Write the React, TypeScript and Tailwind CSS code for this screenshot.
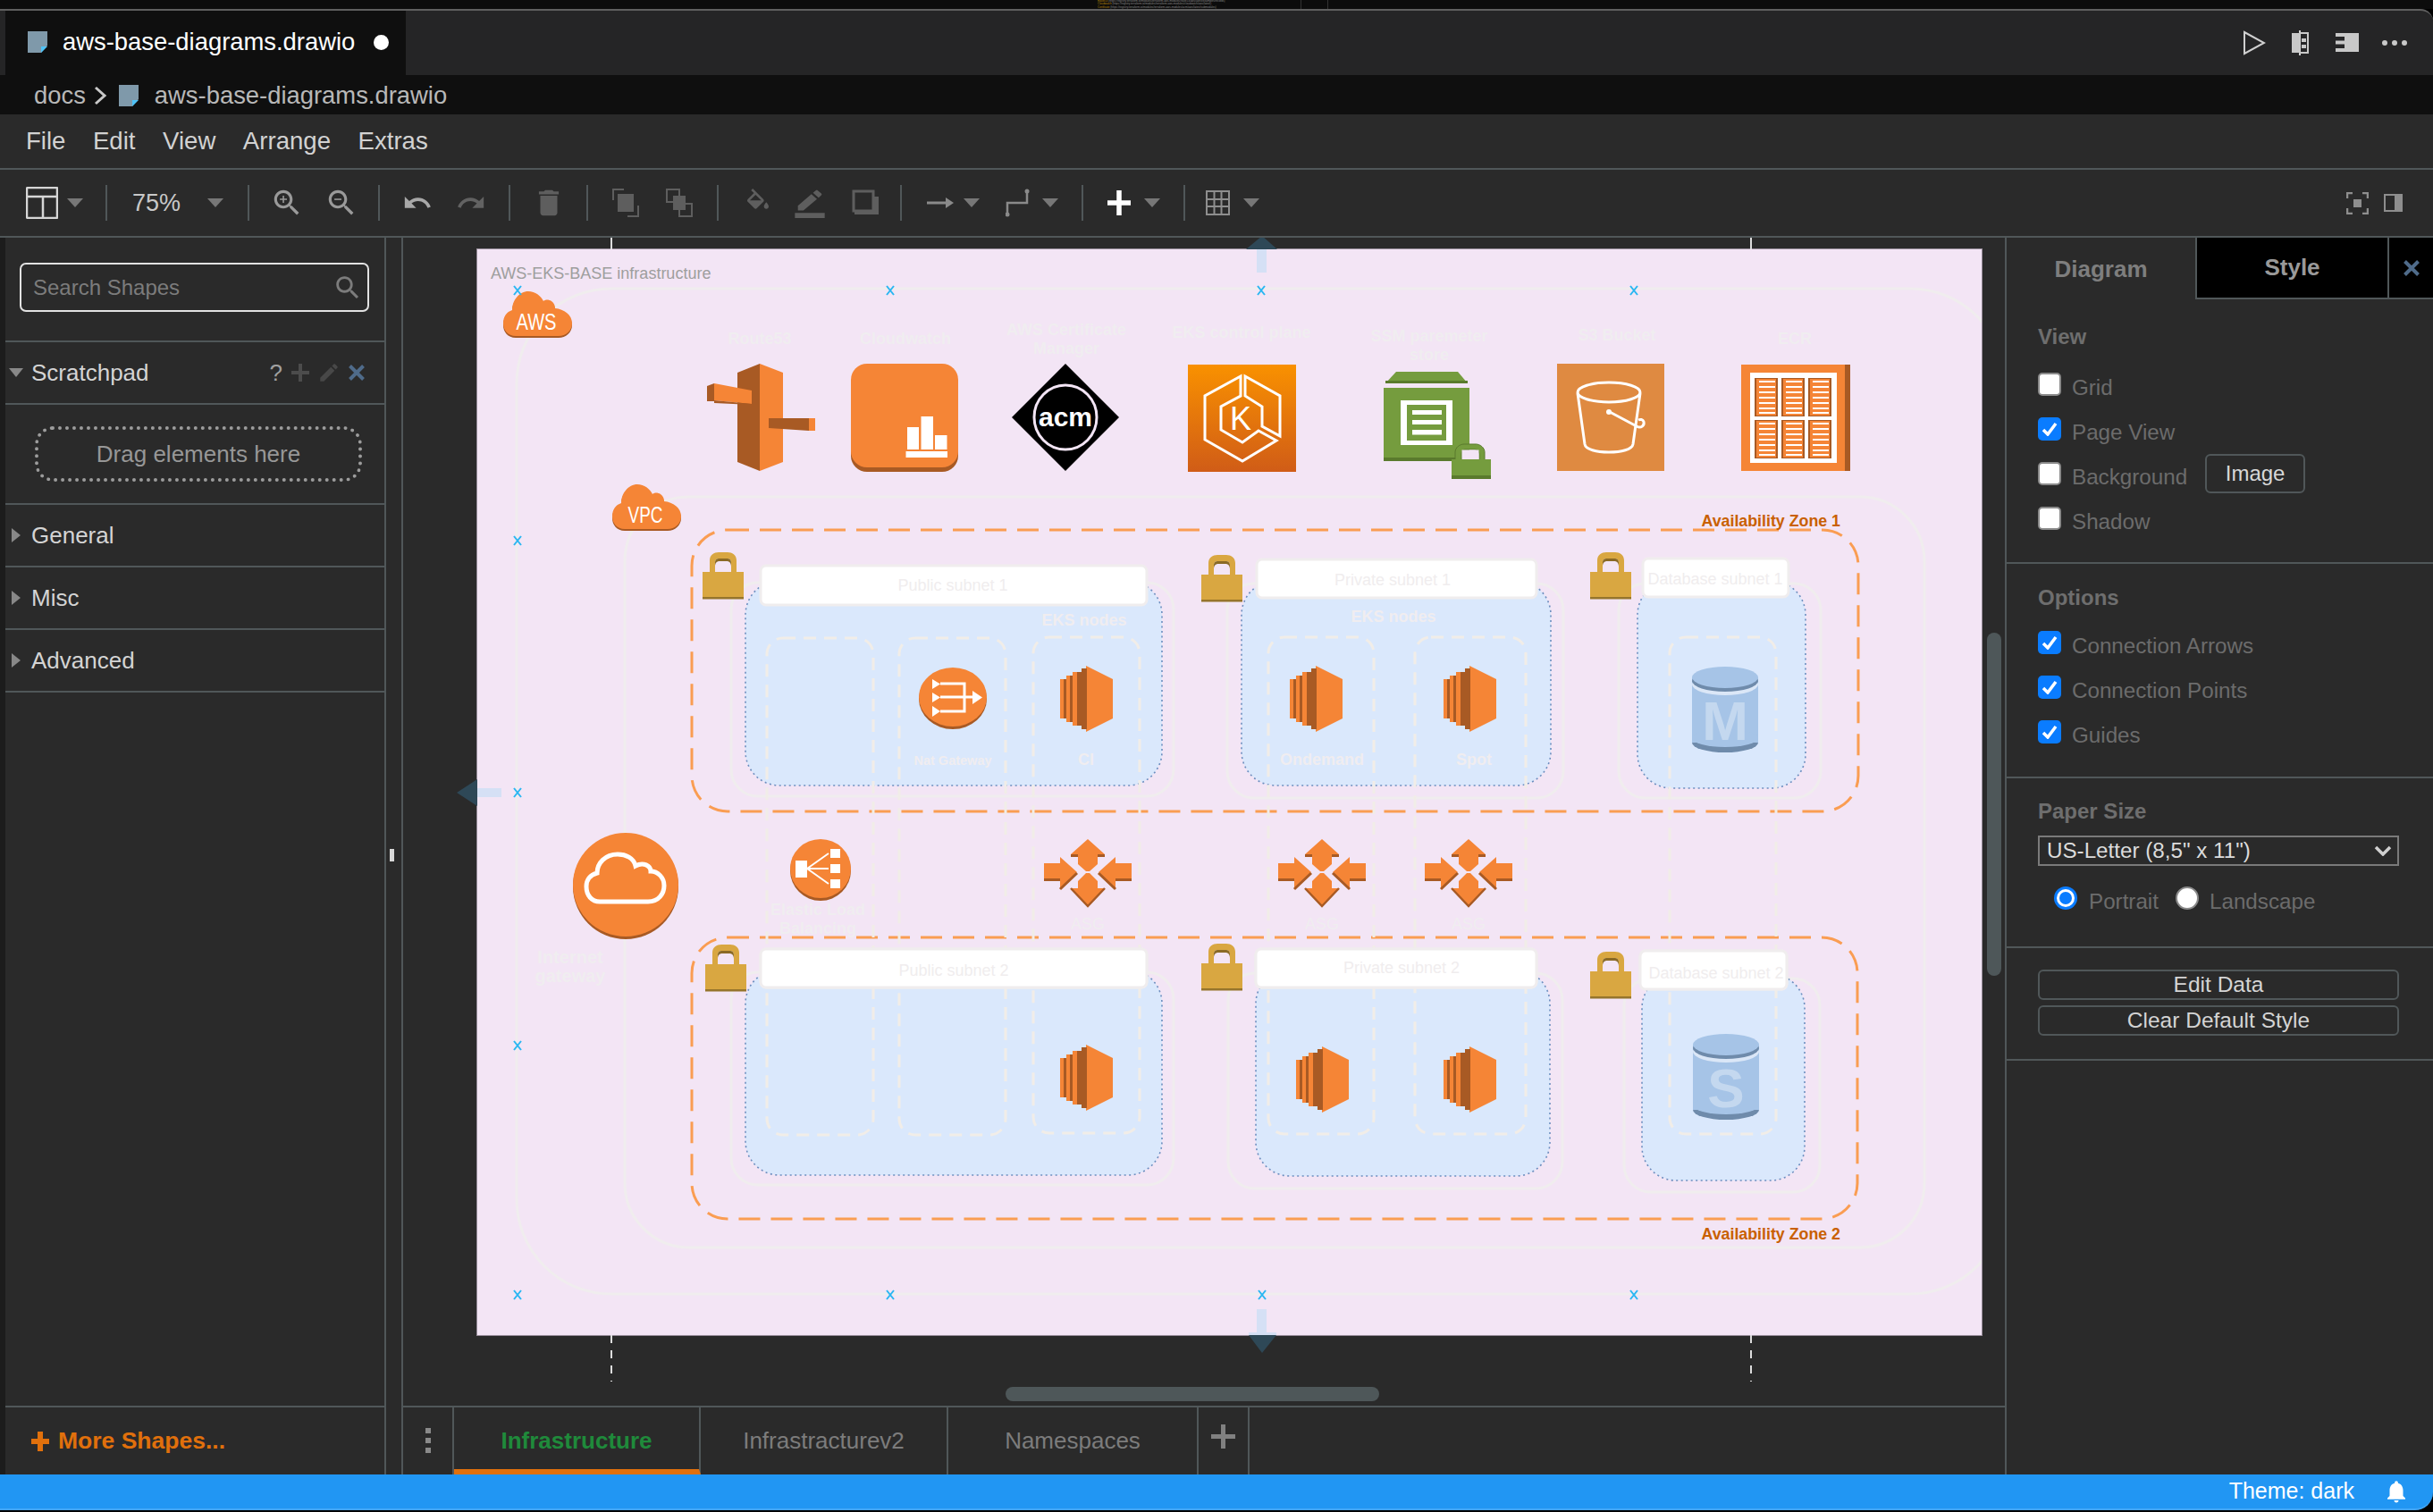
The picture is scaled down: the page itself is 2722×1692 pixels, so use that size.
import React from 'react';

const ORANGE = '#f58536';
const DARK = '#a85a24';
const FAINT = '#f0edf0';
const LINE = '#f0edee';

// material icon paths, the toolbar uses most of these
const P = {
  undo: 'M12.5 8c-2.65 0-5.05.99-6.9 2.6L2 7v9h9l-3.62-3.62c1.39-1.16 3.16-1.88 5.12-1.88 3.54 0 6.55 2.31 7.6 5.5l2.37-.78C21.08 11.03 17.15 8 12.5 8z',
  redo: 'M18.4 10.6C16.55 8.99 14.15 8 11.5 8c-4.65 0-8.58 3.03-9.96 7.22L3.9 16c1.05-3.19 4.05-5.5 7.6-5.5 1.95 0 3.73.72 5.12 1.88L13 16h9V7l-3.6 3.6z',
  trash: 'M6 19c0 1.1.9 2 2 2h8c1.1 0 2-.9 2-2V7H6v12zM19 4h-3.5l-1-1h-5l-1 1H5v2h14V4z',
  search: 'M15.5 14h-.79l-.28-.27C15.41 12.59 16 11.11 16 9.5 16 5.91 13.09 3 9.5 3S3 5.91 3 9.5 5.91 16 9.5 16c1.61 0 3.09-.59 4.23-1.57l.27.28v.79l5 4.99L20.49 19l-4.99-5zm-6 0C7.01 14 5 11.99 5 9.5S7.01 5 9.5 5 14 7.01 14 9.5 11.99 14 9.5 14z',
  fill: 'M16.56 8.94L7.62 0 6.21 1.41l2.38 2.38-5.15 5.15c-.59.59-.59 1.54 0 2.12l5.5 5.5c.29.29.68.44 1.06.44s.77-.15 1.06-.44l5.5-5.5c.59-.58.59-1.53 0-2.12zM5.21 10L10 5.21 14.79 10H5.21zM19 11.5s-2 2.17-2 3.5c0 1.1.9 2 2 2s2-.9 2-2c0-1.33-2-3.5-2-3.5z',
  line: 'M22 24H2v-4h20v4zM13.06 5.19l3.75 3.75L7.75 18H4v-3.75l9.06-9.06zm4.82 2.68l-3.75-3.75 1.83-1.83c.39-.39 1.02-.39 1.41 0l2.34 2.34c.39.39.39 1.02 0 1.41l-1.83 1.83z',
  bell: 'M12 22c1.1 0 2-.9 2-2h-4c0 1.1.89 2 2 2zm6-6v-5c0-3.07-1.64-5.64-4.5-6.32V4c0-.83-.67-1.5-1.5-1.5s-1.5.67-1.5 1.5v.68C7.63 5.36 6 7.92 6 11v5l-2 2v1h16v-1l-2-2z',
  edit: 'M3 17.25V21h3.75L17.81 9.94l-3.75-3.75L3 17.25zM20.71 7.04c.39-.39.39-1.02 0-1.41l-2.34-2.34c-.39-.39-1.02-.39-1.41 0l-1.83 1.83 3.75 3.75 1.83-1.83z',
};

const Mat = ({ d, size, color, className }: { d: string; size: number; color: string; className?: string }) => (
  <svg width={size} height={size} viewBox="0 0 24 24" className={className}>
    <path d={d} fill={color} />
  </svg>
);

const Sep = ({ className }: { className: string }) => <div className={`w-[2px] h-[40px] bg-[#505759] shrink-0 ${className}`} />;

const Caret = ({ className }: { className: string }) => (
  <svg width="18" height="10" viewBox="0 0 18 10" className={`shrink-0 ${className}`}>
    <polygon points="0,0 18,0 9,10" fill="#777" />
  </svg>
);

const FileIcon = () => (
  <svg width="22" height="24" viewBox="0 0 22 24">
    <path d="M0 0H22V16L15 24H0Z" fill="#7f99aa" />
    <path d="M15 24V17H22Z" fill="#4fc3f7" />
  </svg>
);

const ToolBar = () => (
  <div className="h-[76px] flex items-center pl-[29px] pr-[34px] border-b-2 border-[#505759] bg-[#2a2a2a] shrink-0">
    <svg width="36" height="36" viewBox="0 0 36 36" className="shrink-0">
      <rect x="1" y="1" width="34" height="34" rx="1" fill="none" stroke="#d6d6d6" strokeWidth="2.5" />
      <path d="M1 11H35M19 11V35" stroke="#d6d6d6" strokeWidth="2.5" />
    </svg>
    <Caret className="ml-[10px]" />
    <Sep className="ml-[25px]" />
    <span className="ml-[28px] w-[56px] text-[27px] text-[#c8c8c8]">75%</span>
    <Caret className="ml-[28px]" />
    <Sep className="ml-[27px]" />
    <svg width="38" height="38" viewBox="0 0 24 24" className="ml-[23px] shrink-0">
      <path d={P.search} fill="#9a9a9a" />
      <path d="M12 10h-2v2H9v-2H7V9h2V7h1v2h2v1z" fill="#9a9a9a" />
    </svg>
    <svg width="38" height="38" viewBox="0 0 24 24" className="ml-[23px] shrink-0">
      <path d={P.search} fill="#9a9a9a" />
      <path d="M7 9h5v1H7z" fill="#9a9a9a" />
    </svg>
    <Sep className="ml-[22px]" />
    <Mat d={P.undo} size={34} color="#a8a8a8" className="ml-[25px] shrink-0" />
    <Mat d={P.redo} size={34} color="#626262" className="ml-[26px] shrink-0" />
    <Sep className="ml-[25px]" />
    <Mat d={P.trash} size={38} color="#5e5e5e" className="ml-[24px] shrink-0" />
    <Sep className="ml-[23px]" />
    <svg width="32" height="34" viewBox="0 0 32 34" className="ml-[26px] shrink-0">
      <path d="M2 14V2H14M18 32H30V20" fill="none" stroke="#5e5e5e" strokeWidth="2" />
      <rect x="7" y="7" width="18" height="20" fill="#5e5e5e" />
    </svg>
    <svg width="32" height="34" viewBox="0 0 32 34" className="ml-[28px] shrink-0">
      <rect x="2" y="2" width="14" height="14" fill="none" stroke="#5e5e5e" strokeWidth="2" />
      <rect x="16" y="18" width="14" height="14" fill="none" stroke="#5e5e5e" strokeWidth="2" />
      <rect x="9" y="9" width="14" height="16" fill="#5e5e5e" />
    </svg>
    <Sep className="ml-[26px]" />
    <Mat d={P.fill} size={32} color="#5e5e5e" className="ml-[28px] shrink-0" />
    <svg width="40" height="34" viewBox="0 0 24 24" preserveAspectRatio="none" className="ml-[22px] shrink-0">
      <path d={P.line} fill="#5e5e5e" />
    </svg>
    <svg width="30" height="30" viewBox="0 0 30 30" className="ml-[27px] shrink-0">
      <rect x="2" y="2" width="22" height="22" fill="none" stroke="#5e5e5e" strokeWidth="3" />
      <path d="M3 24V28H30V8H25V24Z" fill="#5e5e5e" />
    </svg>
    <Sep className="ml-[24px]" />
    <svg width="30" height="14" viewBox="0 0 30 14" className="ml-[28px] shrink-0">
      <path d="M0 7H22" stroke="#8a8a8a" strokeWidth="3" />
      <polygon points="21,1 30,7 21,13" fill="#8a8a8a" />
    </svg>
    <Caret className="ml-[11px]" />
    <svg width="28" height="32" viewBox="0 0 28 32" className="ml-[29px] shrink-0">
      <path d="M2 28V16H24V4" fill="none" stroke="#8a8a8a" strokeWidth="2.5" />
      <circle cx="24" cy="3" r="2.5" fill="#8a8a8a" />
      <circle cx="2" cy="29" r="2.5" fill="#8a8a8a" />
    </svg>
    <Caret className="ml-[13px]" />
    <Sep className="ml-[26px]" />
    <svg width="26" height="28" viewBox="0 0 26 28" className="ml-[27px] shrink-0">
      <path d="M13 0V28M0 14H26" stroke="#fff" strokeWidth="5.5" />
    </svg>
    <Caret className="ml-[15px]" />
    <Sep className="ml-[26px]" />
    <svg width="27" height="28" viewBox="0 0 27 28" className="ml-[23px] shrink-0">
      <path d="M1 1H26V27H1ZM1 10H26M1 18H26M9.5 1V27M17.5 1V27" fill="none" stroke="#8e8e8e" strokeWidth="2" />
    </svg>
    <Caret className="ml-[15px]" />
    <svg width="25" height="25" viewBox="0 0 25 25" className="ml-auto shrink-0">
      <path d="M1 7V1H7M18 1H24V7M24 18V24H18M7 24H1V18" fill="none" stroke="#8e8e8e" strokeWidth="2.5" />
      <rect x="8" y="8" width="9" height="9" fill="#8e8e8e" />
    </svg>
    <svg width="21" height="20" viewBox="0 0 21 20" className="ml-[17px] shrink-0">
      <rect x="1" y="1" width="19" height="18" fill="none" stroke="#8e8e8e" strokeWidth="2" />
      <rect x="12" y="1" width="8" height="18" fill="#8e8e8e" />
    </svg>
  </div>
);

const Row = ({ name }: { name: string }) => (
  <div className="h-[70px] flex items-center border-b-2 border-[#505759] shrink-0 pl-[7px]">
    <svg width="10" height="16" viewBox="0 0 10 16"><polygon points="0,0 10,8 0,16" fill="#888" /></svg>
    <span className="ml-[12px] text-[26px] text-[#d4d4d4]">{name}</span>
  </div>
);

const SideBar = () => (
  <div className="w-[426px] shrink-0 flex flex-col bg-[#2a2a2a] border-r-2 border-[#505759]">
    <div className="h-[117px] border-b-2 border-[#505759] shrink-0 pt-[28px] pl-[16px]">
      <div className="w-[391px] h-[55px] border-2 border-[#e2e2e2] rounded-[7px] flex items-center pl-[13px] pr-[5px]">
        <span className="text-[24px] text-[#7c7c7c]">Search Shapes</span>
        <Mat d={P.search} size={34} color="#7c7c7c" className="ml-auto" />
      </div>
    </div>
    <div className="h-[70px] flex items-center border-b-2 border-[#505759] shrink-0 pl-[4px]">
      <svg width="16" height="10" viewBox="0 0 16 10"><polygon points="0,0 16,0 8,10" fill="#888" /></svg>
      <span className="ml-[9px] text-[26px] text-[#d4d4d4]">Scratchpad</span>
      <span className="ml-auto text-[26px] text-[#a0a0a0]">?</span>
      <svg width="20" height="20" viewBox="0 0 20 20" className="ml-[10px]"><path d="M10 0V20M0 10H20" stroke="#4c4c4c" strokeWidth="4" /></svg>
      <Mat d={P.edit} size={26} color="#484848" className="ml-[9px]" />
      <svg width="18" height="18" viewBox="0 0 18 18" className="ml-[9px] mr-[22px]"><path d="M1.5 1.5L16.5 16.5M16.5 1.5L1.5 16.5" stroke="#4f6b8a" strokeWidth="4" /></svg>
    </div>
    <div className="h-[112px] border-b-2 border-[#505759] shrink-0 pt-[24px] pl-[33px]">
      <div className="w-[366px] h-[62px] border-[4px] border-dotted border-[#9c9c9c] rounded-[20px] flex items-center justify-center text-[26px] text-[#979797]">
        Drag elements here
      </div>
    </div>
    <Row name="General" />
    <Row name="Misc" />
    <Row name="Advanced" />
    <div className="mt-auto h-[77px] border-t-2 border-[#505759] flex items-center pl-[29px] text-[#e0700c]">
      <svg width="20" height="24" viewBox="0 0 20 24"><path d="M10 1V23M0 12H20" stroke="#e0700c" strokeWidth="6" /></svg>
      <span className="ml-[10px] text-[26.5px] font-bold">More Shapes...</span>
    </div>
  </div>
);

const Check = ({ on, label, className }: { on?: boolean; label: string; className: string }) => (
  <div className={`flex items-start h-[26px] ${className}`}>
    {on ? (
      <div className="w-[26px] h-[26px] rounded-[5px] bg-[#0a7cff] flex items-center justify-center">
        <svg width="18" height="16" viewBox="0 0 18 16"><path d="M2 9L7 14L16 2" fill="none" stroke="#fff" strokeWidth="3.5" /></svg>
      </div>
    ) : (
      <div className="w-[26px] h-[26px] rounded-[5px] bg-white border-2 border-[#8a8a8a]" />
    )}
    <span className="ml-[12px] text-[24.2px] leading-[34px] text-[#6c6c6c]">{label}</span>
  </div>
);

const RightPanel = () => (
  <div className="w-[479px] shrink-0 flex flex-col bg-[#2a2a2a] border-l-2 border-[#505759]">
    <div className="h-[69px] flex shrink-0">
      <div className="w-[211px] flex items-center justify-center text-[26px] font-bold text-[#7e7e7e] pt-[1px]">Diagram</div>
      <div className="w-[215px] flex items-center justify-center text-[26px] font-bold text-[#999] bg-black border-l-2 border-b-2 border-[#505759] pb-[1px]">Style</div>
      <div className="flex-1 flex items-center justify-center bg-black border-l-2 border-b-2 border-[#505759]">
        <svg width="18" height="18" viewBox="0 0 18 18"><path d="M1.5 1.5L16.5 16.5M16.5 1.5L1.5 16.5" stroke="#4f6b8a" strokeWidth="4" /></svg>
      </div>
    </div>
    <div className="h-[296px] border-b-2 border-[#505759] pl-[35px] pt-[27px] shrink-0">
      <div className="text-[24px] leading-[30px] font-bold text-[#6e6e6e]">View</div>
      <Check label="Grid" className="mt-[25px]" />
      <Check on label="Page View" className="mt-[24px]" />
      <div className="flex items-start h-[26px] mt-[24px]">
        <Check label="Background" className="" />
        <div className="ml-[20px] -mt-[9px] w-[112px] h-[44px] border-2 border-[#505759] rounded-[6px] flex items-center justify-center text-[24px] text-[#d8d8d8]">Image</div>
      </div>
      <Check label="Shadow" className="mt-[24px]" />
    </div>
    <div className="h-[240px] border-b-2 border-[#505759] pl-[35px] pt-[23px] shrink-0">
      <div className="text-[24px] leading-[30px] font-bold text-[#6e6e6e]">Options</div>
      <Check on label="Connection Arrows" className="mt-[22px]" />
      <Check on label="Connection Points" className="mt-[24px]" />
      <Check on label="Guides" className="mt-[24px]" />
    </div>
    <div className="h-[190px] border-b-2 border-[#505759] pl-[35px] pt-[22px] shrink-0">
      <div className="text-[24px] leading-[30px] font-bold text-[#6e6e6e]">Paper Size</div>
      <div className="mt-[12px] w-[404px] h-[34px] border-2 border-[#7a7a7a] flex items-center pl-[8px] pr-[6px] text-[24.2px] text-[#dcdcdc]">
        US-Letter (8,5" x 11")
        <svg width="20" height="12" viewBox="0 0 20 12" className="ml-auto"><path d="M2 2L10 10L18 2" fill="none" stroke="#d0d0d0" strokeWidth="3.5" /></svg>
      </div>
      <div className="mt-[23px] ml-[18px] flex items-start h-[34px]">
        <div className="w-[26px] h-[26px] rounded-full bg-[#0a7cff] flex items-center justify-center">
          <div className="w-[20px] h-[20px] rounded-full bg-white flex items-center justify-center">
            <div className="w-[14px] h-[14px] rounded-full bg-[#0a7cff]" />
          </div>
        </div>
        <span className="ml-[13px] text-[24.2px] leading-[34px] text-[#6c6c6c] w-[97px]">Portrait</span>
        <div className="w-[26px] h-[26px] rounded-full bg-white border-2 border-[#8a8a8a]" />
        <span className="ml-[12px] text-[24.2px] leading-[34px] text-[#6c6c6c]">Landscape</span>
      </div>
    </div>
    <div className="h-[126px] border-b-2 border-[#505759] pl-[35px] pt-[24px] shrink-0">
      <div className="w-[404px] h-[34px] border-2 border-[#505759] rounded-[6px] flex items-center justify-center text-[24.5px] text-[#d4d4d4]">Edit Data</div>
      <div className="mt-[6px] w-[404px] h-[34px] border-2 border-[#505759] rounded-[6px] flex items-center justify-center text-[24.5px] text-[#d4d4d4]">Clear Default Style</div>
    </div>
  </div>
);

const PageTabs = () => (
  <div className="h-[77px] shrink-0 border-t-2 border-[#505759] flex bg-[#2a2a2a]">
    <div className="w-[57px] flex items-center justify-center border-r-2 border-[#505759] pb-[2px]">
      <svg width="6" height="28" viewBox="0 0 6 28">
        <rect y="0" width="6" height="6" fill="#8a8a8a" />
        <rect y="11" width="6" height="6" fill="#8a8a8a" />
        <rect y="22" width="6" height="6" fill="#8a8a8a" />
      </svg>
    </div>
    <div className="w-[276px] flex items-center justify-center border-r-2 border-[#505759] border-b-[6px] border-b-[#e0700c] pt-[6px] text-[26px] font-bold text-[#1f8a3b]">Infrastructure</div>
    <div className="w-[277px] flex items-center justify-center border-r-2 border-[#505759] text-[26px] text-[#7c7c7c]">Infrastracturev2</div>
    <div className="w-[280px] flex items-center justify-center border-r-2 border-[#505759] text-[26px] text-[#7c7c7c]">Namespaces</div>
    <div className="w-[57px] flex items-center justify-center border-r-2 border-[#505759] pb-[10px]">
      <svg width="27" height="27" viewBox="0 0 27 27"><path d="M13.5 0V27M0 13.5H27" stroke="#808080" strokeWidth="5" /></svg>
    </div>
  </div>
);

// --- diagram shapes, all in screenshot coordinates ---

const Box = ({ x, y, w, h, r }: { x: number; y: number; w: number; h: number; r: number }) => (
  <rect x={x} y={y} width={w} height={h} rx={r} fill="none" stroke={LINE} strokeWidth="3" />
);

const Subnet = ({ o, b, w, label }: { o: number[]; b: number[]; w: number[]; label: [string, number, number] }) => (
  <g>
    <rect x={o[0]} y={o[1]} width={o[2] - o[0]} height={o[3] - o[1]} rx="30" fill="none" stroke={LINE} strokeWidth="3" />
    <rect x={b[0]} y={b[1]} width={b[2] - b[0]} height={b[3] - b[1]} rx="38" fill="#dae8fc" stroke="#6c8ebf" strokeWidth="1.6" strokeDasharray="2 3.5" />
    <rect x={w[0]} y={w[1]} width={w[2] - w[0]} height={w[3] - w[1]} rx="6" fill="#fff" stroke={LINE} strokeWidth="3" />
    <text x={label[1]} y={label[2]} textAnchor="middle" dominantBaseline="central" fontSize="18" fill={LINE}>{label[0]}</text>
  </g>
);

const Lock = ({ x, y }: { x: number; y: number }) => (
  <g transform={`translate(${x} ${y})`}>
    <path d="M8 24V9C8 3 13 0 18 0H28C33 0 38 3 38 9V24H32V12C32 8 30 7 27 7H19C16 7 14 8 14 12V24Z" fill="#d9a741" />
    <path d="M14 16V12C14 8 16 7 19 7H27C30 7 32 8 32 12V16C32 12 30 10 27 10H19C16 10 14 12 14 16Z" fill="#8a6a25" />
    <rect x="0" y="22" width="46" height="30" fill="#d9a741" />
    <rect x="0" y="50" width="46" height="2.5" fill="#96752b" />
  </g>
);

const Ec2 = ({ x, y }: { x: number; y: number }) => (
  <g transform={`translate(${x} ${y})`}>
    <polygon points="29,0 59,15 59,59 29,74" fill={ORANGE} />
    <rect x="24" y="3" width="6" height="68" fill={DARK} />
    <rect x="14" y="7" width="10" height="60" fill={ORANGE} />
    <rect x="19" y="7" width="5" height="60" fill={DARK} />
    <rect x="7" y="11" width="7" height="52" fill={ORANGE} />
    <rect x="11" y="11" width="3" height="52" fill={DARK} />
    <rect x="0" y="15" width="7" height="44" fill={ORANGE} />
    <rect x="4" y="15" width="3" height="44" fill={DARK} />
  </g>
);

const Asg = ({ x, y }: { x: number; y: number }) => (
  <g transform={`translate(${x} ${y})`}>
    <polygon points="30,17 30,20 38,20 38,24 60,24 60,20 68,20 68,17" fill={DARK} />
    <polygon points="49,0 68,17 60,17 60,28 51,36 47,36 38,28 38,17 30,17" fill={ORANGE} />
    <polygon points="49,75 30,55 38,55 38,47 47,38 51,38 60,47 60,55 68,55" fill={ORANGE} />
    <path d="M30 55L49 75L68 55" fill="none" stroke={DARK} strokeWidth="2.5" />
    <polygon points="0,27 18,27 18,20 37,37 18,55 18,44 0,44" fill={ORANGE} />
    <polygon points="98,27 80,27 80,20 61,37 80,55 80,44 98,44" fill={ORANGE} />
    <path d="M0 45.5H18M98 45.5H80M37 38L18 56M61 38L80 56" fill="none" stroke={DARK} strokeWidth="3" />
  </g>
);

const Cloud = ({ x, y, t, tw }: { x: number; y: number; t: string; tw: number }) => (
  <g transform={`translate(${x} ${y})`}>
    <path d="M14 52C5 52 0 45 0 38C0 30 4 25 10 23C10 11 18 2 28 2C36 2 42 7 45 13C47 11 51 11 54 13C57 15 58 18 58 21C68 22 77 28 77 38C77 46 70 52 62 52Z" fill={DARK} />
    <path d="M14 50C5 50 0 43 0 36C0 28 4 23 10 21C10 10 18 0 28 0C36 0 42 5 45 11C47 9 51 9 54 11C57 13 58 16 58 19C68 20 77 26 77 36C77 44 70 50 62 50Z" fill={ORANGE} />
    <text x="37" y="34" textAnchor="middle" dominantBaseline="central" fontSize="26" fill="#fff" textLength={tw} lengthAdjust="spacingAndGlyphs">{t}</text>
  </g>
);

const Rds = ({ x, y, letter }: { x: number; y: number; letter: string }) => (
  <g transform={`translate(${x} ${y})`}>
    <ellipse cx="37" cy="85" rx="37" ry="11" fill="#6f8bab" />
    <rect x="0" y="12" width="74" height="73" fill="#a6c4e7" />
    <ellipse cx="37" cy="80" rx="37" ry="10" fill="#a6c4e7" />
    <ellipse cx="37" cy="20" rx="37" ry="12" fill="#dbe7f7" />
    <ellipse cx="37" cy="16" rx="37" ry="12" fill="#6f8bab" />
    <ellipse cx="37" cy="12" rx="37" ry="12" fill="#a6c4e7" />
    <text x="37" y="60" textAnchor="middle" dominantBaseline="central" fontSize="62" fontWeight="700" fill="#c4d8ef">{letter}</text>
  </g>
);

const Mark = ({ x, y }: { x: number; y: number }) => (
  <path d={`M${x - 4} ${y - 5}L${x + 4} ${y + 5}M${x + 4} ${y - 5}L${x - 4} ${y + 5}`} stroke="#29b6f2" strokeWidth="2" />
);

const Lbl = ({ x, y, t, s = 18, b = true, c = FAINT }: { x: number; y: number; t: string; s?: number; b?: boolean; c?: string }) => (
  <text x={x} y={y} textAnchor="middle" dominantBaseline="central" fontSize={s} fontWeight={b ? 700 : 400} fill={c}>{t}</text>
);

const Column = ({ x, x2, y, y2 }: { x: number; x2: number; y: number; y2: number }) => (
  <rect x={x} y={y} width={x2 - x} height={y2 - y} rx="18" fill="none" stroke="#f1ede8" strokeWidth="3" strokeDasharray="14 9" />
);

const Ecr = () => {
  const cols = [1953, 1983, 2013];
  const rows = [423, 470];
  return (
    <g>
      <rect x="1947" y="408" width="122" height="119" fill={ORANGE} />
      <rect x="2063" y="408" width="6" height="119" fill={DARK} />
      <rect x="1957" y="417" width="97" height="101" fill="#fff" />
      {cols.map((cx) =>
        rows.map((cy) => (
          <g key={`${cx}-${cy}`}>
            <rect x={cx + 9} y={cy} width="26" height="43" fill={DARK} />
            <rect x={cx + 11} y={cy + 1} width="22" height="41" fill={ORANGE} />
            {[3, 9, 15, 21, 27, 33, 38].map((dy) => (
              <rect key={dy} x={cx + 14} y={cy + dy} width="18" height="2" fill="#fff" />
            ))}
          </g>
        ))
      )}
    </g>
  );
};

const Diagram = () => (
  <svg width="1793" height="1307" viewBox="450 266 1793 1307" className="absolute left-0 top-0">
    <defs>
      <clipPath id="page"><rect x="533" y="279" width="1683" height="1215" /></clipPath>
      <linearGradient id="eks" x1="0" y1="0" x2="0" y2="1">
        <stop offset="0" stopColor="#f99100" />
        <stop offset="1" stopColor="#d05c17" />
      </linearGradient>
    </defs>

    {/* page break guides */}
    <path d="M683 266V279M1958 266V279" stroke="#ddd" strokeWidth="2" />
    <path d="M683 1494V1546M1958 1494V1546" stroke="#ddd" strokeWidth="2" strokeDasharray="9 8" />

    {/* hover arrows, half on the dark canvas */}
    <polygon points="1411,264 1428,279 1393,279" fill="#2e4857" />
    <rect x="1405" y="279" width="11" height="26" fill="#d5e0f5" />
    <rect x="1405" y="1465" width="11" height="28" fill="#d5e0f5" />
    <polygon points="1396,1491 1427,1491 1427,1494 1396,1494" fill="#d5e0f5" />
    <polygon points="1396,1494 1427,1494 1411,1514" fill="#2e4857" />
    <polygon points="533,872 533,902 510,887" fill="#2e4857" />
    <rect x="533" y="882" width="27" height="10" fill="#d5e0f5" />

    <g clipPath="url(#page)">
      <text x="548" y="306" dominantBaseline="central" fontSize="18" fill="#9e9e9e">AWS-EKS-BASE infrastructure</text>
      <Box x={577} y={323} w={1665} h={1125} r={106} />
      <Box x={698} y={556} w={1454} h={840} r={72} />

      {/* top row labels */}
      <Lbl x={849} y={379} t="Route53" />
      <Lbl x={1012} y={379} t="Cloudwatch" />
      <Lbl x={1192} y={369} t="AWS Certificate" />
      <Lbl x={1192} y={390} t="Manager" />
      <Lbl x={1388} y={372} t="EKS control plane" />
      <Lbl x={1598} y={376} t="SSM paremeter" />
      <Lbl x={1598} y={397} t="store" />
      <Lbl x={1808} y={375} t="S3 Bucket" />
      <Lbl x={2007} y={379} t="ECR" />

      {/* Route53 */}
      <polygon points="824,417 849,407 849,527 824,517" fill={DARK} />
      <polygon points="875,417 849,407 849,527 875,517" fill={ORANGE} />
      <polygon points="790,432 798,429 798,449 790,449" fill={DARK} />
      <polygon points="798,429 840,437 840,452 798,448" fill={ORANGE} />
      <polygon points="798,448 840,452 840,453 798,451" fill={DARK} />
      <polygon points="859,468 904,468 904,482 859,479" fill={DARK} />
      <rect x="904" y="468" width="7" height="14" fill={ORANGE} />

      {/* Cloudwatch */}
      <rect x="951" y="413" width="120" height="115" rx="18" fill={DARK} />
      <rect x="951" y="407" width="120" height="116" rx="18" fill={ORANGE} />
      <rect x="1014" y="478" width="13" height="25" fill="#fff" />
      <rect x="1029.5" y="466" width="13.5" height="37" fill="#fff" />
      <rect x="1045" y="487" width="13.5" height="16" fill="#fff" />
      <rect x="1012.5" y="505" width="46.5" height="7" fill="#fff" />

      {/* ACM */}
      <polygon points="1191,407 1251,467 1191,527 1131,467" fill="#000" />
      <ellipse cx="1191" cy="467" rx="35" ry="36" fill="#000" stroke="#f3e5f5" strokeWidth="3" />
      <text x="1191" y="466" textAnchor="middle" dominantBaseline="central" fontSize="30" fontWeight="700" fill="#fff">acm</text>

      {/* EKS */}
      <rect x="1328" y="408" width="121" height="120" fill="url(#eks)" />
      <path d="M1387 421L1347 443V492L1389 516L1427 493L1407 482L1389 495L1365 481V455L1387 443ZM1392 421L1431 443V488L1411 477V455L1392 443Z" fill="none" stroke="#fff" strokeWidth="3" />
      <text x="1387" y="468" textAnchor="middle" dominantBaseline="central" fontSize="36" fill="#fff">K</text>

      {/* SSM */}
      <polygon points="1549,429 1561,416 1630,416 1641,429" fill="#759c3e" />
      <rect x="1549" y="426" width="92" height="3" fill="#5a7a2d" />
      <rect x="1547" y="434" width="96" height="82" fill="#759c3e" />
      <rect x="1547" y="512" width="96" height="4" fill="#5a7a2d" />
      <rect x="1566" y="448" width="58" height="50" fill="#fff" />
      <rect x="1573" y="453" width="44" height="40" fill="#759c3e" />
      <rect x="1579" y="459" width="33" height="5" fill="#fff" />
      <rect x="1579" y="470" width="33" height="5" fill="#fff" />
      <rect x="1579" y="481" width="33" height="5.5" fill="#fff" />
      <path d="M1627 516V506C1627 501 1632 497 1637 497H1650C1655 497 1660 501 1660 506V516H1654V508C1654 505 1652 503 1649 503H1638C1636 503 1634 505 1634 508V516Z" fill="#759c3e" stroke="#5a7a2d" strokeWidth="1" />
      <rect x="1634.5" y="503.5" width="19" height="11" fill="#f3e5f5" />
      <rect x="1623" y="514" width="44" height="22" fill="#759c3e" />
      <rect x="1623" y="532" width="44" height="4" fill="#5a7a2d" />

      {/* S3 */}
      <rect x="1741" y="407" width="120" height="120" fill="#df8a41" />
      <g fill="none" stroke="#fff" strokeWidth="3">
        <ellipse cx="1799" cy="439" rx="35" ry="11" />
        <path d="M1764 440L1772 497C1773 503 1785 506 1799 506C1813 506 1825 503 1826 497L1834 440" />
        <path d="M1800 461L1830 477C1835 480 1839 476 1838 472C1837 469 1834 469 1832 470" />
      </g>
      <circle cx="1799" cy="461" r="3" fill="#fff" />

      <Ecr />

      {/* availability zones */}
      <rect x="773" y="593" width="1305" height="315" rx="40" fill="none" stroke="#fa9d52" strokeWidth="3" strokeDasharray="24 12" />
      <rect x="773" y="1049" width="1304" height="315" rx="40" fill="none" stroke="#fa9d52" strokeWidth="3" strokeDasharray="24 12" />
      <text x="2058" y="583" textAnchor="end" dominantBaseline="central" fontSize="17.8" fontWeight="700" fill="#c96000">Availability Zone 1</text>
      <text x="2058" y="1381" textAnchor="end" dominantBaseline="central" fontSize="17.8" fontWeight="700" fill="#c96000">Availability Zone 2</text>

      <Subnet o={[817, 652, 1312, 891]} b={[833, 650, 1299, 879]} w={[850, 633, 1282, 677]} label={['Public subnet 1', 1065, 655]} />
      <Subnet o={[1372, 653, 1748, 893]} b={[1388, 650, 1734, 879]} w={[1405, 626, 1718, 669]} label={['Private subnet 1', 1557, 649]} />
      <Subnet o={[1810, 653, 2036, 893]} b={[1831, 650, 2019, 882]} w={[1837, 625, 2000, 668]} label={['Database subnet 1', 1918, 648]} />
      <Subnet o={[817, 1088, 1312, 1326]} b={[833, 1085, 1299, 1315]} w={[850, 1062, 1282, 1105]} label={['Public subnet 2', 1066, 1086]} />
      <Subnet o={[1373, 1089, 1747, 1330]} b={[1404, 1085, 1733, 1316]} w={[1404, 1062, 1718, 1105]} label={['Private subnet 2', 1567, 1083]} />
      <Subnet o={[1816, 1095, 2035, 1334]} b={[1836, 1090, 2018, 1321]} w={[1834, 1064, 1998, 1107]} label={['Database subnet 2', 1919, 1089]} />

      {/* instance columns run through both zones, behind the white labels */}
      <Column x={857} x2={976} y={714} y2={1270} />
      <Column x={1005} x2={1124} y={714} y2={1270} />
      <Column x={1155} x2={1274} y={713} y2={1268} />
      <Column x={1418} x2={1536} y={713} y2={1269} />
      <Column x={1582} x2={1706} y={713} y2={1269} />
      <Column x={1867} x2={1986} y={713} y2={1269} />
      <rect x="850" y="1062" width="432" height="43" rx="6" fill="#fff" stroke={LINE} strokeWidth="3" />
      <text x="1066" y="1086" textAnchor="middle" dominantBaseline="central" fontSize="18" fill={LINE}>Public subnet 2</text>
      <rect x="1404" y="1062" width="314" height="43" rx="6" fill="#fff" stroke={LINE} strokeWidth="3" />
      <text x="1567" y="1083" textAnchor="middle" dominantBaseline="central" fontSize="18" fill={LINE}>Private subnet 2</text>
      <rect x="1834" y="1064" width="164" height="43" rx="6" fill="#fff" stroke={LINE} strokeWidth="3" />
      <text x="1919" y="1089" textAnchor="middle" dominantBaseline="central" fontSize="18" fill={LINE}>Database subnet 2</text>

      <Lock x={785} y={618} />
      <Lock x={1343} y={621} />
      <Lock x={1778} y={618} />
      <Lock x={788} y={1057} />
      <Lock x={1343} y={1056} />
      <Lock x={1778} y={1065} />

      <Lbl x={1212} y={694} t="EKS nodes" />
      <Lbl x={1558} y={690} t="EKS nodes" />
      <Lbl x={1065} y={851} t="Nat Gateway" s={14.5} />
      <Lbl x={1214} y={850} t="CI" />
      <Lbl x={1478} y={850} t="Ondemand" />
      <Lbl x={1648} y={850} t="Spot" />

      {/* NAT gateway */}
      <ellipse cx="1065" cy="782" rx="38" ry="34" fill={DARK} />
      <ellipse cx="1065" cy="780" rx="38" ry="33" fill={ORANGE} />
      <path d="M1051 765H1078V796H1051M1051 780H1088" fill="none" stroke="#fff" strokeWidth="3" />
      <polygon points="1042,760 1051,765.5 1042,771" fill="#fff" />
      <polygon points="1042,775 1051,780.5 1042,786" fill="#fff" />
      <polygon points="1042,790 1051,796 1042,802" fill="#fff" />
      <polygon points="1087,773 1098,780.5 1087,788" fill="#fff" />

      <Ec2 x={1185} y={745} />
      <Ec2 x={1442} y={745} />
      <Ec2 x={1614} y={745} />
      <Ec2 x={1185} y={1169} />
      <Ec2 x={1449} y={1171} />
      <Ec2 x={1614} y={1171} />

      <Rds x={1892} y={746} letter="M" />
      <Rds x={1893} y={1157} letter="S" />

      {/* internet gateway */}
      <ellipse cx="699" cy="992" rx="59" ry="59" fill={DARK} />
      <ellipse cx="699" cy="990" rx="59" ry="58" fill={ORANGE} />
      <path d="M670 1009H724C736 1009 742 1000 742 991C742 982 735 975 727 975C727 969 719 964 710 969C708 960 699 956 690 956C676 956 667 966 667 977C659 979 655 985 655 992C655 1002 661 1009 670 1009Z" fill="none" stroke="#fff" strokeWidth="5" />
      <Lbl x={637} y={1071} t="Internet" s={20} />
      <Lbl x={637} y={1092} t="gateway" s={20} />

      {/* load balancer */}
      <ellipse cx="917" cy="974" rx="34" ry="34" fill={DARK} />
      <ellipse cx="917" cy="972" rx="34" ry="33" fill={ORANGE} />
      <rect x="889" y="963" width="13" height="19" fill="#fff" />
      <rect x="928" y="950" width="11" height="10" fill="#fff" />
      <rect x="928" y="967" width="11" height="10" fill="#fff" />
      <rect x="928" y="984" width="11" height="10" fill="#fff" />
      <path d="M902 972L926 955M902 972H926M902 972L926 989" stroke="#fff" strokeWidth="2" />
      <Lbl x={914} y={1018} t="Elastic Load" s={18} />
      <Lbl x={914} y={1039} t="Balancing" s={18} />

      <Asg x={1167} y={939} />
      <Asg x={1429} y={939} />
      <Asg x={1593} y={939} />
      <Lbl x={1216} y={1034} t="ASG" b={false} />
      <Lbl x={1478} y={1034} t="ASG" b={false} />
      <Lbl x={1642} y={1034} t="ASG" b={false} />

      <Cloud x={562} y={326} t="AWS" tw={45} />
      <Cloud x={684} y={542} t="VPC" tw={39} />

      {[[578, 325], [995, 325], [1410, 325], [1827, 325], [578, 605], [578, 887], [578, 1170], [578, 1449], [995, 1449], [1411, 1449], [1827, 1449]].map(([x, y]) => (
        <Mark key={`${x}-${y}`} x={x} y={y} />
      ))}
    </g>
  </svg>
);

export default function App() {
  return (
    <div className="w-[2722px] h-[1692px] flex flex-col overflow-hidden bg-black font-['Liberation_Sans',Arial,sans-serif]">
      {/* whatever sits behind the window */}
      <div className="h-[10px] shrink-0 bg-[#0c0c0c] relative overflow-hidden">
        <div className="absolute left-[1228px] top-[0.2px] text-[3px] leading-[3.3px] text-[#8a8a8a] whitespace-nowrap">
          <div><span className="text-[#b8860b]">Route53 </span>(https://registry.terraform.io/modules/terraform-aws-modules/route53/aws/latest/examples/records)</div>
          <div><span className="text-[#b8860b]">Cloudwatch </span>(https://registry.terraform.io/modules/terraform-aws-modules/cloudwatch/aws/latest)</div>
          <div><span className="text-[#b8860b]">Certificate </span>(https://registry.terraform.io/modules/terraform-aws-modules/acm/aws/latest/submodules)</div>
        </div>
        <div className="absolute left-[1455px] top-0 h-full w-px bg-[#333]" />
        <div className="absolute left-[1485px] top-0 h-full w-px bg-[#333]" />
      </div>
      <div className="h-[74px] shrink-0 border-t-2 border-[#5f5f5f] bg-[#252526] rounded-tr-[14px] flex">
        <div className="w-[448px] ml-[6px] bg-[#0f0f0f] flex items-center pl-[25px] pb-[2px]">
          <FileIcon />
          <span className="ml-[17px] text-[27.4px] text-white">aws-base-diagrams.drawio</span>
          <div className="ml-[21px] w-[17px] h-[17px] rounded-full bg-white" />
        </div>
        <div className="ml-auto flex items-center pr-[29px]">
          <svg width="26" height="28" viewBox="0 0 26 28"><path d="M2 2L24 14L2 26Z" fill="none" stroke="#d0d0d0" strokeWidth="2" /></svg>
          <svg width="22" height="28" viewBox="0 0 22 28" className="ml-[27px]">
            <path d="M11 0V28" stroke="#d0d0d0" strokeWidth="2" />
            <path d="M11 3H2V25H11Z" fill="#c8c8c8" />
            <path d="M11 3H20V25H11" fill="none" stroke="#c8c8c8" strokeWidth="2" />
            <rect x="13" y="9" width="5" height="4" fill="#c8c8c8" />
            <rect x="13" y="16" width="5" height="4" fill="#c8c8c8" />
          </svg>
          <svg width="26" height="22" viewBox="0 0 26 22" className="ml-[29px]">
            <rect x="10" y="0" width="16" height="21" fill="#c8c8c8" />
            <rect x="0" y="0" width="10" height="4" fill="#c8c8c8" />
            <rect x="0" y="8.5" width="10" height="4" fill="#c8c8c8" />
            <rect x="0" y="17" width="10" height="4" fill="#c8c8c8" />
          </svg>
          <svg width="28" height="6" viewBox="0 0 28 6" className="ml-[26px]">
            <circle cx="3" cy="3" r="3" fill="#c8c8c8" />
            <circle cx="14" cy="3" r="3" fill="#c8c8c8" />
            <circle cx="25" cy="3" r="3" fill="#c8c8c8" />
          </svg>
        </div>
      </div>
      <div className="h-[44px] shrink-0 pl-[38px] pt-[2px] bg-[#0f0f0f] flex items-center text-[27.4px] text-[#b8b8b8]">
        docs
        <svg width="15" height="22" viewBox="0 0 15 22" className="ml-[9px]"><path d="M2 2L12 11L2 20" fill="none" stroke="#c8c8c8" strokeWidth="3" /></svg>
        <span className="ml-[13px]"><FileIcon /></span>
        <span className="ml-[18px]">aws-base-diagrams.drawio</span>
      </div>
      <div className="h-[62px] shrink-0 bg-[#2a2a2a] border-b-2 border-[#505759] flex items-center pl-[29px] gap-[30.5px] text-[27.6px] text-[#d2d2d2]">
        <span>File</span>
        <span>Edit</span>
        <span>View</span>
        <span>Arrange</span>
        <span>Extras</span>
      </div>
      <ToolBar />
      <div className="h-[1384px] shrink-0 flex">
        <div className="w-[6px] shrink-0 bg-[#1c1c1c]" />
        <SideBar />
        <div className="w-[19px] shrink-0 bg-[#2a2a2a] border-r-2 border-[#505759] relative">
          <div className="absolute left-[4px] top-[684px] w-[5px] h-[14px] bg-[#d8d8d8]" />
        </div>
        <div className="flex-1 min-w-0 flex flex-col">
          <div className="flex-1 relative overflow-hidden bg-[#2a2a2a]">
            <div className="ml-[83px] mt-[13px] w-[1683px] h-[1215px] bg-[#f3e5f5] shadow-[0_0_0_1px_#978c9a]" />
            <Diagram />
            {/* scrollbars */}
            <div className="absolute left-[674px] top-[1286px] w-[418px] h-[16px] rounded-[8px] bg-[#4e5759]" />
            <div className="absolute left-[1772px] top-[442px] w-[16px] h-[384px] rounded-[8px] bg-[#4e5759]" />
          </div>
          <PageTabs />
        </div>
        <RightPanel />
      </div>
      <div className="h-[40px] shrink-0 bg-[#2196f3] border-b-2 border-[#42a5f5] rounded-br-[20px] flex items-center pr-[26px] text-[25px] text-white">
        <span className="ml-auto">Theme: dark</span>
        <Mat d={P.bell} size={30} color="#fff" className="ml-[32px]" />
      </div>
    </div>
  );
}
